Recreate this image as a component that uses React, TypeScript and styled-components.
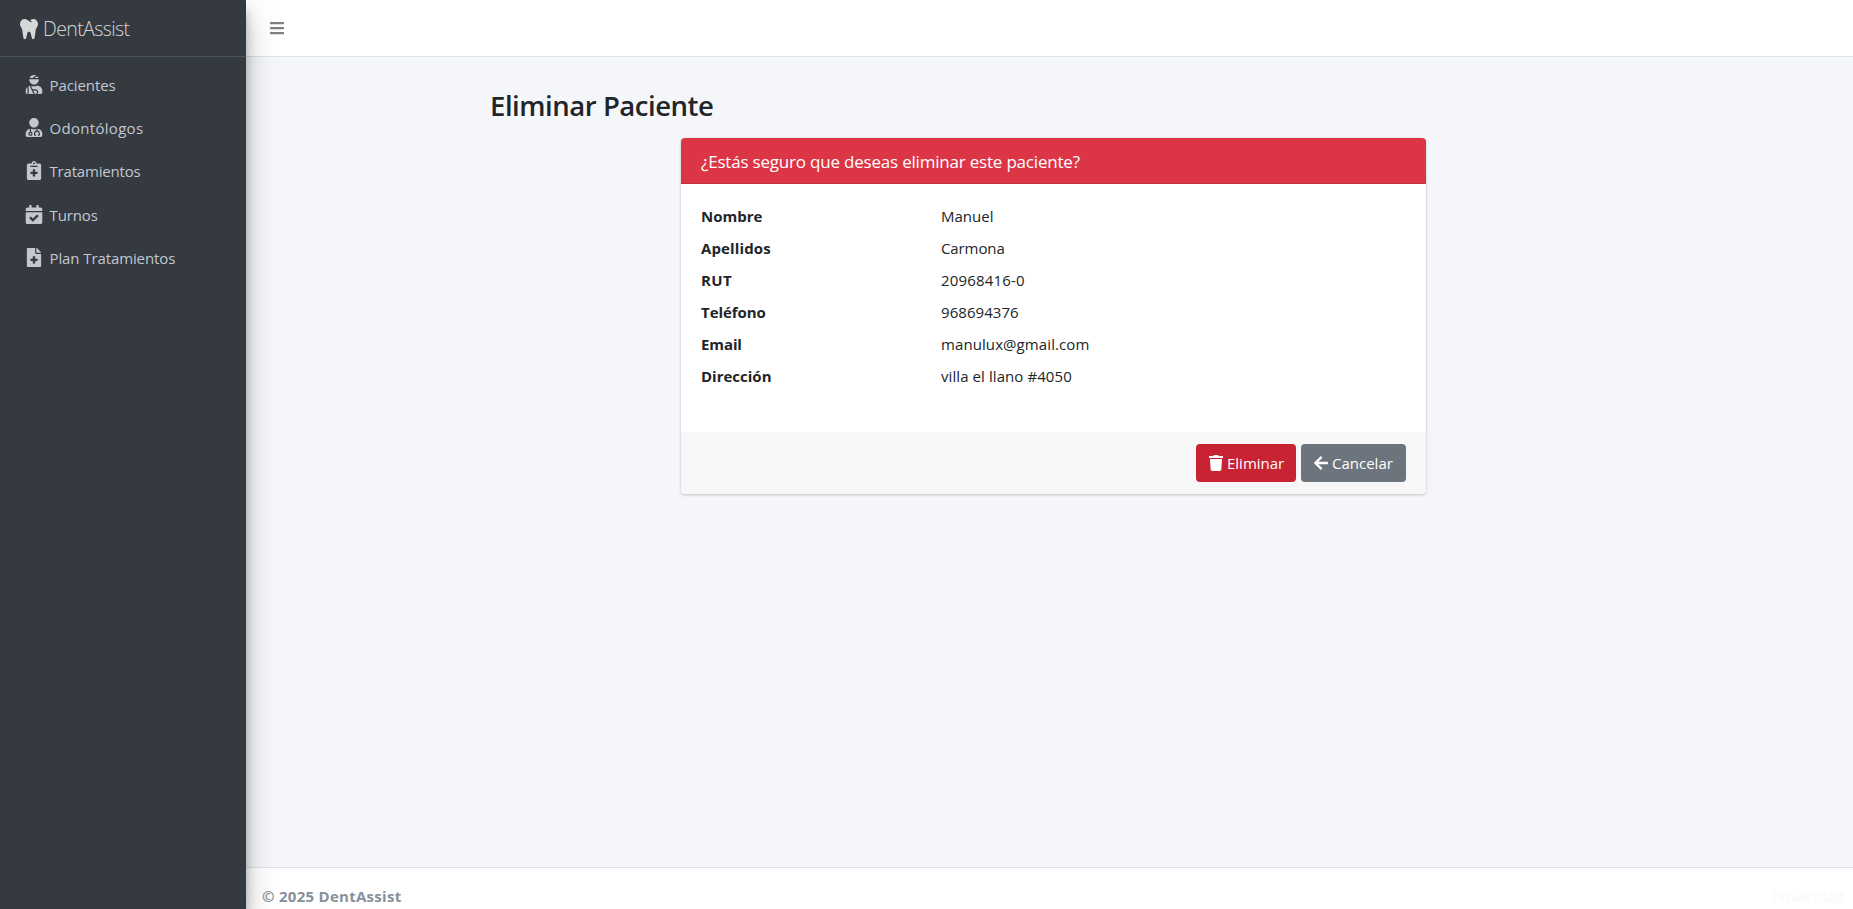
import React from "react";
import styled, { createGlobalStyle } from "styled-components";
import { FaArrowLeft, FaBars, FaCalendarCheck, FaFileMedical, FaNotesMedical, FaTooth, FaTrash, FaUserInjured, FaUserMd } from "react-icons/fa";

const GlobalStyle = createGlobalStyle`
  *, *::before, *::after { box-sizing: border-box; }
  html, body { margin: 0; height: 100%; overflow: hidden; }
  body {
    font-family: "Open Sans", "Noto Sans", sans-serif;
    font-size: 15px;
    line-height: 24px;
    color: #212529;
    background: #f4f6f9;
  }
`;

const Page = styled.div`
  display: grid;
  grid-template-columns: 246px 1fr;
  height: 909px;
  overflow: hidden;
`;

const Sidebar = styled.aside`
  position: relative;
  z-index: 2;
  background: #343a40;
  color: #c2c7d0;
  box-shadow: 0 14px 28px rgba(0, 0, 0, 0.25), 0 10px 10px rgba(0, 0, 0, 0.22);
`;

const Brand = styled.a`
  display: flex;
  align-items: center;
  height: 57px;
  padding: 2px 0 0 20px;
  border-bottom: 1px solid #4b545c;
  color: rgba(255, 255, 255, 0.8);
  font-size: 19.5px;
  font-weight: 300;
  svg { width: 18px; height: 20.5px; margin-right: 5px; }
`;

const Nav = styled.nav`
  display: flex;
  flex-direction: column;
  gap: 3.2px;
  padding: 8px 8px 0;
`;

const NavLink = styled.a`
  display: flex;
  align-items: center;
  height: 40px;
  padding-left: 16px;
  svg { width: 20px; height: 19px; margin: 0 5.5px 1px 0; }
`;

const Label = styled.span<{ $track?: number }>`
  letter-spacing: ${(p) => p.$track ?? 0}px;
  white-space: pre;
`;

const Main = styled.div`
  display: flex;
  flex-direction: column;
  min-width: 0;
`;

const TopBar = styled.header`
  display: flex;
  align-items: center;
  flex: none;
  height: 57px;
  padding-left: 23px;
  background: #fff;
  border-bottom: 1px solid #dee2e6;
  color: rgba(0, 0, 0, 0.5);
`;

const Content = styled.main`
  flex: 1;
  padding: 32px 0 0 243px;
`;

const Title = styled.h2`
  margin: 0 0 15px;
  padding-left: 1px;
  font-size: 27.5px;
  font-weight: 600;
  line-height: 34px;
`;

const Card = styled.section`
  width: 745px;
  margin-left: 192px;
  background: #fff;
  border-radius: 4px;
  box-shadow: 0 0 1px rgba(0, 0, 0, 0.125), 0 1px 3px rgba(0, 0, 0, 0.2);
  overflow: hidden;
`;

const CardHeader = styled.div`
  height: 46px;
  padding: 13px 20px 0;
  background: #dc3545;
  border-bottom: 1px solid #c23040;
  color: #fff;
  font-size: 17px;
  line-height: 22px;
`;

const Details = styled.dl`
  display: grid;
  grid-template-columns: 240px 1fr;
  row-gap: 8px;
  height: 248px;
  margin: 0;
  padding: 20px;
  align-content: start;
`;

const Term = styled.dt`
  font-weight: 700;
`;

const Value = styled.dd`
  margin: 0;
`;

const CardFooter = styled.div`
  display: flex;
  justify-content: flex-end;
  gap: 5px;
  height: 62px;
  padding: 12px 20px;
  background: #f7f7f7;
`;

const Button = styled.button<{ $tone: string; $width: number }>`
  display: flex;
  align-items: center;
  width: ${(p) => p.$width}px;
  height: 38px;
  padding: 0 0 0 12px;
  border: 0;
  border-radius: 4px;
  background: ${(p) => p.$tone};
  color: #fff;
  font: inherit;
  svg { margin-right: 3px; }
`;

const Footer = styled.footer`
  display: flex;
  justify-content: space-between;
  flex: none;
  height: 42px;
  padding: 16px 9px 0 16px;
  background: #fff;
  border-top: 1px solid #dee2e6;
  color: #869099;
  font-weight: 700;
`;

const FooterLink = styled.a`
  color: #f8f9fa;
  font-weight: 400;
`;

const links = [
  { icon: FaUserInjured, text: "Pacientes", track: -0.08 },
  { icon: FaUserMd, text: "Odontólogos", track: 0.3 },
  { icon: FaNotesMedical, text: "Tratamientos", track: -0.18 },
  { icon: FaCalendarCheck, text: "Turnos", track: -0.12 },
  { icon: FaFileMedical, text: "Plan Tratamientos", track: -0.1 },
];

const fields = [
  { term: "Nombre", value: "Manuel", termTrack: 0, valueTrack: 0 },
  { term: "Apellidos", value: "Carmona", termTrack: 0.12, valueTrack: -0.1 },
  { term: "RUT", value: "20968416-0", termTrack: 0.4, valueTrack: 0.16 },
  { term: "Teléfono", value: "968694376", termTrack: -0.05, valueTrack: 0.05 },
  { term: "Email", value: "manulux@gmail.com", termTrack: -0.1, valueTrack: 0.09 },
  { term: "Dirección", value: "villa el llano #4050", termTrack: 0, valueTrack: 0.08 },
];

export default function App() {
  return (
    <>
      <GlobalStyle />
      <Page>
        <Sidebar>
          <Brand><FaTooth /><Label $track={-0.6}>DentAssist</Label></Brand>
          <Nav>
            {links.map(({ icon: Icon, text, track }) => (
              <NavLink key={text}><Icon /><Label $track={track}>{text}</Label></NavLink>
            ))}
          </Nav>
        </Sidebar>
        <Main>
          <TopBar><FaBars size={16} /></TopBar>
          <Content>
            <Title><Label $track={-0.46}>Eliminar Paciente</Label></Title>
            <Card>
              <CardHeader><Label $track={-0.2}>¿Estás seguro que deseas eliminar este paciente?</Label></CardHeader>
              <Details>
                {fields.map((f) => (
                  <React.Fragment key={f.term}>
                    <Term><Label $track={f.termTrack}>{f.term}</Label></Term>
                    <Value><Label $track={f.valueTrack}>{f.value}</Label></Value>
                  </React.Fragment>
                ))}
              </Details>
              <CardFooter>
                <Button $tone="#c82333" $width={100}><FaTrash size={16} /><Label>Eliminar</Label></Button>
                <Button $tone="#6c757d" $width={105}><FaArrowLeft size={16} /><Label>Cancelar</Label></Button>
              </CardFooter>
            </Card>
          </Content>
          <Footer><Label $track={0.28}>© 2025 DentAssist</Label><FooterLink><Label>Privacidad</Label></FooterLink></Footer>
        </Main>
      </Page>
    </>
  );
}
